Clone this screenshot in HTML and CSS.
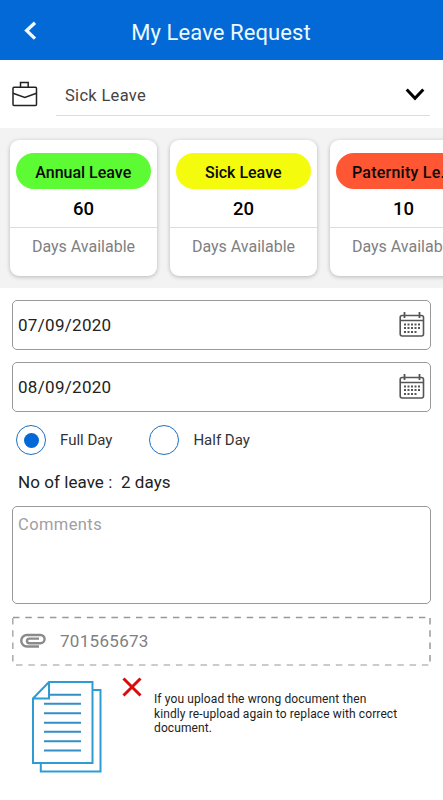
FILE: index.html
```html
<!DOCTYPE html>
<html lang="en">
<head>
    <meta charset="UTF-8">
    <meta name="viewport" content="width=device-width, initial-scale=1.0">
    <title>My Leave Request</title>
    <link rel="stylesheet" href="styles.css">
</head>
<body>
    <header class="header">
        <svg class="back" width="14" height="20" viewBox="0 0 14 20"><path d="M12 1.8 3.7 9.6l8.3 8" fill="none" stroke="#ecfaff" stroke-width="3.4"/></svg>
        <h1>My Leave Request</h1>
    </header>

    <div class="leave-type">
        <svg class="briefcase" width="26" height="26" viewBox="0 0 26 26" fill="none" stroke="#222" stroke-width="1.5">
            <rect x="1" y="6.2" width="23.5" height="18.3" rx="1"/>
            <path d="M8.5 6V1.5h7.7V6M1 12.2l11.8 4.2 11.7-4.2"/>
        </svg>
        <div class="select">
            <span>Sick Leave</span>
            <svg width="20" height="14" viewBox="0 0 20 14"><path d="M1.7 1.5 10 10.3l8.3-8.8" fill="none" stroke="#000" stroke-width="3"/></svg>
        </div>
    </div>

    <div class="cards">
        <div class="card">
            <div class="pill green">Annual Leave</div>
            <div class="count">60</div>
            <div class="available">Days Available</div>
        </div>
        <div class="card">
            <div class="pill yellow">Sick Leave</div>
            <div class="count">20</div>
            <div class="available">Days Available</div>
        </div>
        <div class="card">
            <div class="pill red">Paternity Le...</div>
            <div class="count">10</div>
            <div class="available">Days Available</div>
        </div>
    </div>

    <main class="form">
        <div class="date-field">
            <span>07/09/2020</span>
            <svg class="calendar" width="26" height="26" viewBox="0 0 26 26" fill="none" stroke="#555">
                <rect x="1.2" y="3.5" width="23.3" height="20.5" rx="2" stroke-width="1.6"/>
                <path d="M1 8.5h24" stroke-width="1.5"/>
                <path d="M5.5 0v6M20.5 0v6" stroke-width="1.8"/>
                <path d="M5 12.5h17M5 16h17M5 20h14" stroke-width="2" stroke-dasharray="2 1.5"/>
            </svg>
        </div>
        <div class="date-field">
            <span>08/09/2020</span>
            <svg class="calendar" width="26" height="26" viewBox="0 0 26 26" fill="none" stroke="#555">
                <rect x="1.2" y="3.5" width="23.3" height="20.5" rx="2" stroke-width="1.6"/>
                <path d="M1 8.5h24" stroke-width="1.5"/>
                <path d="M5.5 0v6M20.5 0v6" stroke-width="1.8"/>
                <path d="M5 12.5h17M5 16h17M5 20h14" stroke-width="2" stroke-dasharray="2 1.5"/>
            </svg>
        </div>

        <div class="radio-group">
            <label class="radio-option"><span class="radio checked"></span>Full Day</label>
            <label class="radio-option"><span class="radio"></span>Half Day</label>
        </div>

        <p class="total">No of leave :&nbsp; 2 days</p>

        <div class="comments">Comments</div>

        <div class="attachment">
            <svg class="dashes" width="420" height="50" viewBox="0 0 420 50" fill="none" stroke-width="1.5">
                <path d="M1 1.5h417" stroke="#999" stroke-dasharray="6.5 5.8"/>
                <path d="M1 49h417" stroke="#bbb" stroke-dasharray="6.5 5.8" stroke-dashoffset="-3"/>
                <path d="M.8 2v46" stroke="#aaa" stroke-dasharray="6.5 5.8"/>
                <path d="M418 2v45" stroke="#999" stroke-dasharray="6.5 5.8"/>
            </svg>
            <svg class="clip" width="26" height="16" viewBox="0 0 26 16" fill="none" stroke="#8a8a8a" stroke-width="2.4">
                <path d="M19 13.5H7A5.7 5.7 0 0 1 7 2h13.5a4.1 4.1 0 0 1 0 8.2H9.3a2.3 2.3 0 0 1 0-4.600H19"/>
            </svg>
            <span>701565673</span>
        </div>

        <div class="upload">
            <svg class="document" width="72" height="94" viewBox="0 0 72 94" fill="none" stroke="#2f9bd3" stroke-width="2">
                <path d="M18 2h43.500v81H2V18.500zM18 2v16.500H2"/>
                <path d="M62 10h7.500v81.500H9.800v-8"/>
                <path d="M18.500 14.700H50M13 23.800h37M13 33.300h37M13 42.700h37M13 51.800h37M13 61.300h37M13 70.500h37" stroke="#348fc6"/>
            </svg>
            <svg class="remove" width="20" height="20" viewBox="0 0 20 20"><path d="M1.5 1.5l17 17M18.5 1.5l-17 17" stroke="#d90b0b" stroke-width="3"/></svg>
            <p>If you upload the wrong document then<br>kindly re-upload again to replace with correct<br>document.</p>
        </div>
    </main>
</body>
</html>
```

FILE: styles.css
```css
* {
    box-sizing: border-box;
}

body {
    margin: 0;
    height: 800px;
    overflow: hidden;
    background-color: #fff;
    color: #222;
    font-family: Roboto, "Liberation Sans", sans-serif;
}

svg {
    display: block;
    flex: none;
}

.header {
    display: flex;
    align-items: center;
    height: 60px;
    padding: 5px 23px 0;
    background-color: #0269d6;
}

.back {
    margin-top: -3px;
}

.header h1 {
    flex: 1;
    margin: 0 15px 0 0;
    color: #ecfaff;
    font-size: 22px;
    font-weight: 400;
    letter-spacing: 0.08px;
    text-align: center;
}

.leave-type {
    display: flex;
    height: 68px;
    padding: 14px 13px 12px 12px;
}

.briefcase {
    margin: 7px 18px 0 0;
}

.select {
    display: flex;
    flex: 1;
    align-items: center;
    justify-content: space-between;
    padding: 0 5px 0 9px;
    border-bottom: 1px solid #ddd;
    color: #444;
    font-size: 16.5px;
    letter-spacing: 0.3px;
}

.select span {
    padding-top: 1px;
}

.cards {
    display: flex;
    gap: 13px;
    height: 160px;
    padding: 12px 0 12px 10px;
    overflow: hidden;
    background-color: #f3f3f3;
}

.card {
    flex: none;
    width: 147px;
    height: 136px;
    padding-top: 13px;
    border-radius: 9px;
    background-color: #fff;
    box-shadow: 0 1px 4px rgba(0, 0, 0, 0.25);
    text-align: center;
}

.pill {
    height: 36px;
    margin: 0 6px 0 5.5px;
    border-radius: 18px;
    color: #0a0a0a;
    font-size: 16px;
    font-weight: 500;
    line-height: 39px;
    white-space: nowrap;
}

.green {
    background-color: #5dfb34;
}

.yellow {
    background-color: #f4fb0c;
}

.red {
    letter-spacing: 0.25px;
    background-color: #ff5733;
}

.count {
    height: 39px;
    border-bottom: 1px solid #ddd;
    color: #000;
    font-size: 18.5px;
    font-weight: 500;
    line-height: 41px;
}

.available {
    color: #808080;
    font-size: 16px;
    line-height: 37px;
}

.form {
    padding: 12px 12px 0;
}

.date-field {
    display: flex;
    align-items: center;
    justify-content: space-between;
    height: 50px;
    margin-bottom: 11.5px;
    padding: 0 5px;
    border: 1px solid #999;
    border-radius: 5px;
    color: #222;
    font-size: 17px;
    letter-spacing: 0.3px;
}

.radio-group {
    display: flex;
    gap: 37px;
    padding: 2px 4px;
}

.radio-option {
    display: flex;
    align-items: center;
    gap: 14px;
    color: #333;
    font-size: 15px;
}

.radio {
    display: flex;
    align-items: center;
    justify-content: center;
    width: 30px;
    height: 30px;
    border: 1px solid #1c6fc0;
    border-radius: 50%;
}

.checked::after {
    content: "";
    width: 15px;
    height: 15px;
    border-radius: 50%;
    background-color: #0269d6;
}

.total {
    margin: 15px 0 14px 6px;
    font-size: 17px;
    line-height: 20px;
    letter-spacing: 0.06px;
}

.comments {
    height: 98px;
    padding: 8px 5px;
    border: 1px solid #999;
    border-radius: 5px;
    color: #a0a0a0;
    font-size: 16.5px;
    line-height: 20px;
    letter-spacing: 0.4px;
}

.attachment {
    position: relative;
    display: flex;
    align-items: center;
    gap: 14px;
    height: 50px;
    margin-top: 12px;
    padding-left: 8px;
    color: #808080;
    font-size: 17px;
    letter-spacing: 0.3px;
}

.dashes {
    position: absolute;
    top: 0;
    left: 0;
}

.upload {
    display: flex;
    align-items: flex-start;
    padding: 14px 0 0 19px;
}

.remove {
    margin: -3px 12px 0 19px;
}

.upload p {
    margin: 12px 0 0;
    font-size: 12px;
    line-height: 14.5px;
    letter-spacing: 0.11px;
    white-space: nowrap;
}
```
